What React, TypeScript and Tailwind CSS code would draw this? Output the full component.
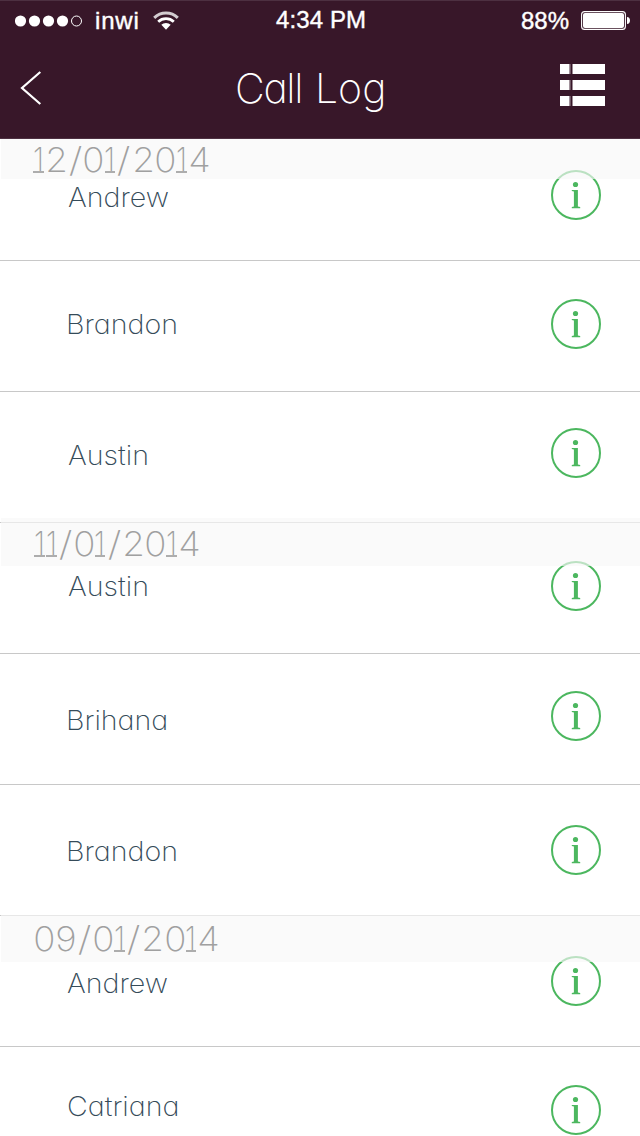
type Row = { name: string; date?: string; row: string; text: string; icon: string; dateBox?: string; dateText?: string };

const rows: Row[] = [
  { name: "Andrew", date: "12/01/2014", row: "h-[122px]", text: "pl-[68px] pt-[43px]", icon: "mt-[31px]", dateBox: "top-0 h-10", dateText: "pl-[32px] pt-px" },
  { name: "Brandon", row: "h-[131px]", text: "pl-[66px] pt-[48px]", icon: "mt-[38px]" },
  { name: "Austin", row: "h-[131px]", text: "pl-[68px] pt-[48px]", icon: "mt-[36px]" },
  { name: "Austin", date: "11/01/2014", row: "h-[131px]", text: "pl-[68px] pt-[48px]", icon: "mt-[38px]", dateBox: "-top-[5px] h-12", dateText: "pl-[33px] pt-[6px]" },
  { name: "Brihana", row: "h-[131px]", text: "pl-[66px] pt-[51px]", icon: "mt-[37px]" },
  { name: "Brandon", row: "h-[131px]", text: "pl-[66px] pt-[51px]", icon: "mt-[40px]" },
  { name: "Andrew", date: "09/01/2014", row: "h-[131px]", text: "pl-[67px] pt-[52px]", icon: "mt-[40px]", dateBox: "-top-px h-[47px]", dateText: "pl-[32px] pt-[4px]" },
  { name: "Catriana", row: "h-[131px]", text: "pl-[67px] pt-[44px]", icon: "mt-[38px]" },
];

const cellWidths: Record<string, string> = {
  "0": "w-[21.7px]",
  "1": "w-[12px]",
  "2": "w-[22.7px]",
  "4": "w-[22px]",
  "9": "w-[22.5px]",
  "/": "w-[15.2px]",
};

function DateText({ value }: { value: string }) {
  return (
    <span className="flex">
      {value.split("").map((c, i) => (
        <span key={i} className={`flex justify-center ${cellWidths[c]}`}>
          {c === "1" ? (
            <span className="relative -left-px">
              <span className="inline-block scale-x-[0.85]">1</span>
              <span className="absolute bottom-[7px] left-[1.5px] h-[1.6px] w-[10.5px] bg-[#adadad]" />
            </span>
          ) : c === "/" ? (
            <span className="inline-block scale-x-[1.2]">/</span>
          ) : (
            <span className="inline-block scale-x-[1.08]">{c}</span>
          )}
        </span>
      ))}
    </span>
  );
}

function InfoIcon() {
  return (
    <svg width="50" height="50" viewBox="0 0 50 50" fill="none">
      <circle cx="25" cy="25" r="24" stroke="#4cb75f" strokeWidth="2" />
      <circle cx="24.5" cy="14.5" r="2.6" fill="#4cb75f" />
      <path d="M20.8 20h6.1v16.5l2.3.6v1.2h-8.4v-1.2l2.1-.6V21.5l-2.1-.4z" fill="#4cb75f" />
    </svg>
  );
}

function StatusBar() {
  return (
    <div className="flex h-[38px] items-center font-['Liberation_Sans',sans-serif] text-[24px] leading-none text-white [-webkit-text-stroke:0.4px_white]">
      <div className="flex w-[276px] items-center pt-px pl-[15px]">
        <svg width="68" height="12" viewBox="0 0 68 12" fill="white">
          <circle cx="5.5" cy="6" r="5.6" />
          <circle cx="19.5" cy="6" r="5.6" />
          <circle cx="33.5" cy="6" r="5.6" />
          <circle cx="47.5" cy="6" r="5.6" />
          <circle cx="61.5" cy="6" r="5" fill="none" stroke="white" />
        </svg>
        <span className="ml-[12px] w-[58px] tracking-[0.8px]">inwi</span>
        <svg width="26" height="20" viewBox="0 0 26 20" fill="none">
          <path d="M1.2 6.8a17 17 0 0 1 23.6 0" stroke="#d3ccd0" strokeWidth="3" />
          <path d="M5.2 10.7a11.5 11.5 0 0 1 15.6 0" stroke="white" strokeWidth="2.8" />
          <path d="M8.3 13.8a6.8 6.8 0 0 1 9.4 0L13 18.8z" fill="white" />
        </svg>
      </div>
      <span className="w-[245px] tracking-[0.1px]">4:34 PM</span>
      <span className="w-[60px] pt-px">88%</span>
      <svg width="50" height="19" viewBox="0 0 50 19" fill="none">
        <rect x=".6" y=".6" width="43.8" height="17.8" rx="3" stroke="white" strokeWidth="1.1" />
        <rect x="2" y="2" width="41" height="15" rx="2" fill="white" />
        <path d="M46 6c4 0 4 7 0 7z" fill="white" />
      </svg>
    </div>
  );
}

export default function App() {
  return (
    <div className="h-[1136px] w-[640px] overflow-hidden bg-white font-['Inter',sans-serif] font-extralight [font-feature-settings:'cv11']">
      <header className="h-[139px] border-y border-[#4d3041] bg-[#381729] text-white">
        <StatusBar />
        <div className="flex items-start">
          <svg className="mt-[31px] ml-[20px]" width="22" height="36" viewBox="0 0 22 36" fill="none">
            <path d="M20.3 2 2 18l18.3 16" stroke="white" strokeWidth="2.2" />
          </svg>
          <h1 className="ml-[193px] flex w-[325px] pt-[24px] text-[41px] leading-[50px] whitespace-nowrap">
            <span className="w-[80px] tracking-[-1.3px]">Call </span>
            <span>Log</span>
          </h1>
          <svg className="mt-[25px]" width="45" height="42" viewBox="0 0 45 42" fill="white">
            <path d="M0 0h9.5v10H0zM12.5 0H45v10H12.5zM0 16h9.5v10H0zM12.5 16H45v10H12.5zM0 32h9.5v10H0zM12.5 32H45v10H12.5z" />
            <path d="M10 0v10M10 16v10M10 32v10" stroke="#a797a0" strokeWidth="1" />
          </svg>
        </div>
      </header>
      <main>
        {rows.map((r, i) => (
          <section key={i} className={`relative flex items-start justify-between border-b border-[#c8c8c8] ${r.row}`}>
            <span className={`text-[27px] leading-[32px] text-[#354b59] ${r.text}`}>
              <span className="inline-block origin-left scale-x-[1.06]">{r.name}</span>
            </span>
            <div className={`mr-[39px] ${r.icon}`}>
              <InfoIcon />
            </div>
            {r.date && (
              <div className={`absolute right-0 left-px bg-[#f8f8f8]/65 ${r.dateBox}`}>
                <div className={`text-[34px] leading-[40px] text-[#a0a0a0] ${r.dateText}`}>
                  <DateText value={r.date} />
                </div>
              </div>
            )}
          </section>
        ))}
      </main>
    </div>
  );
}
